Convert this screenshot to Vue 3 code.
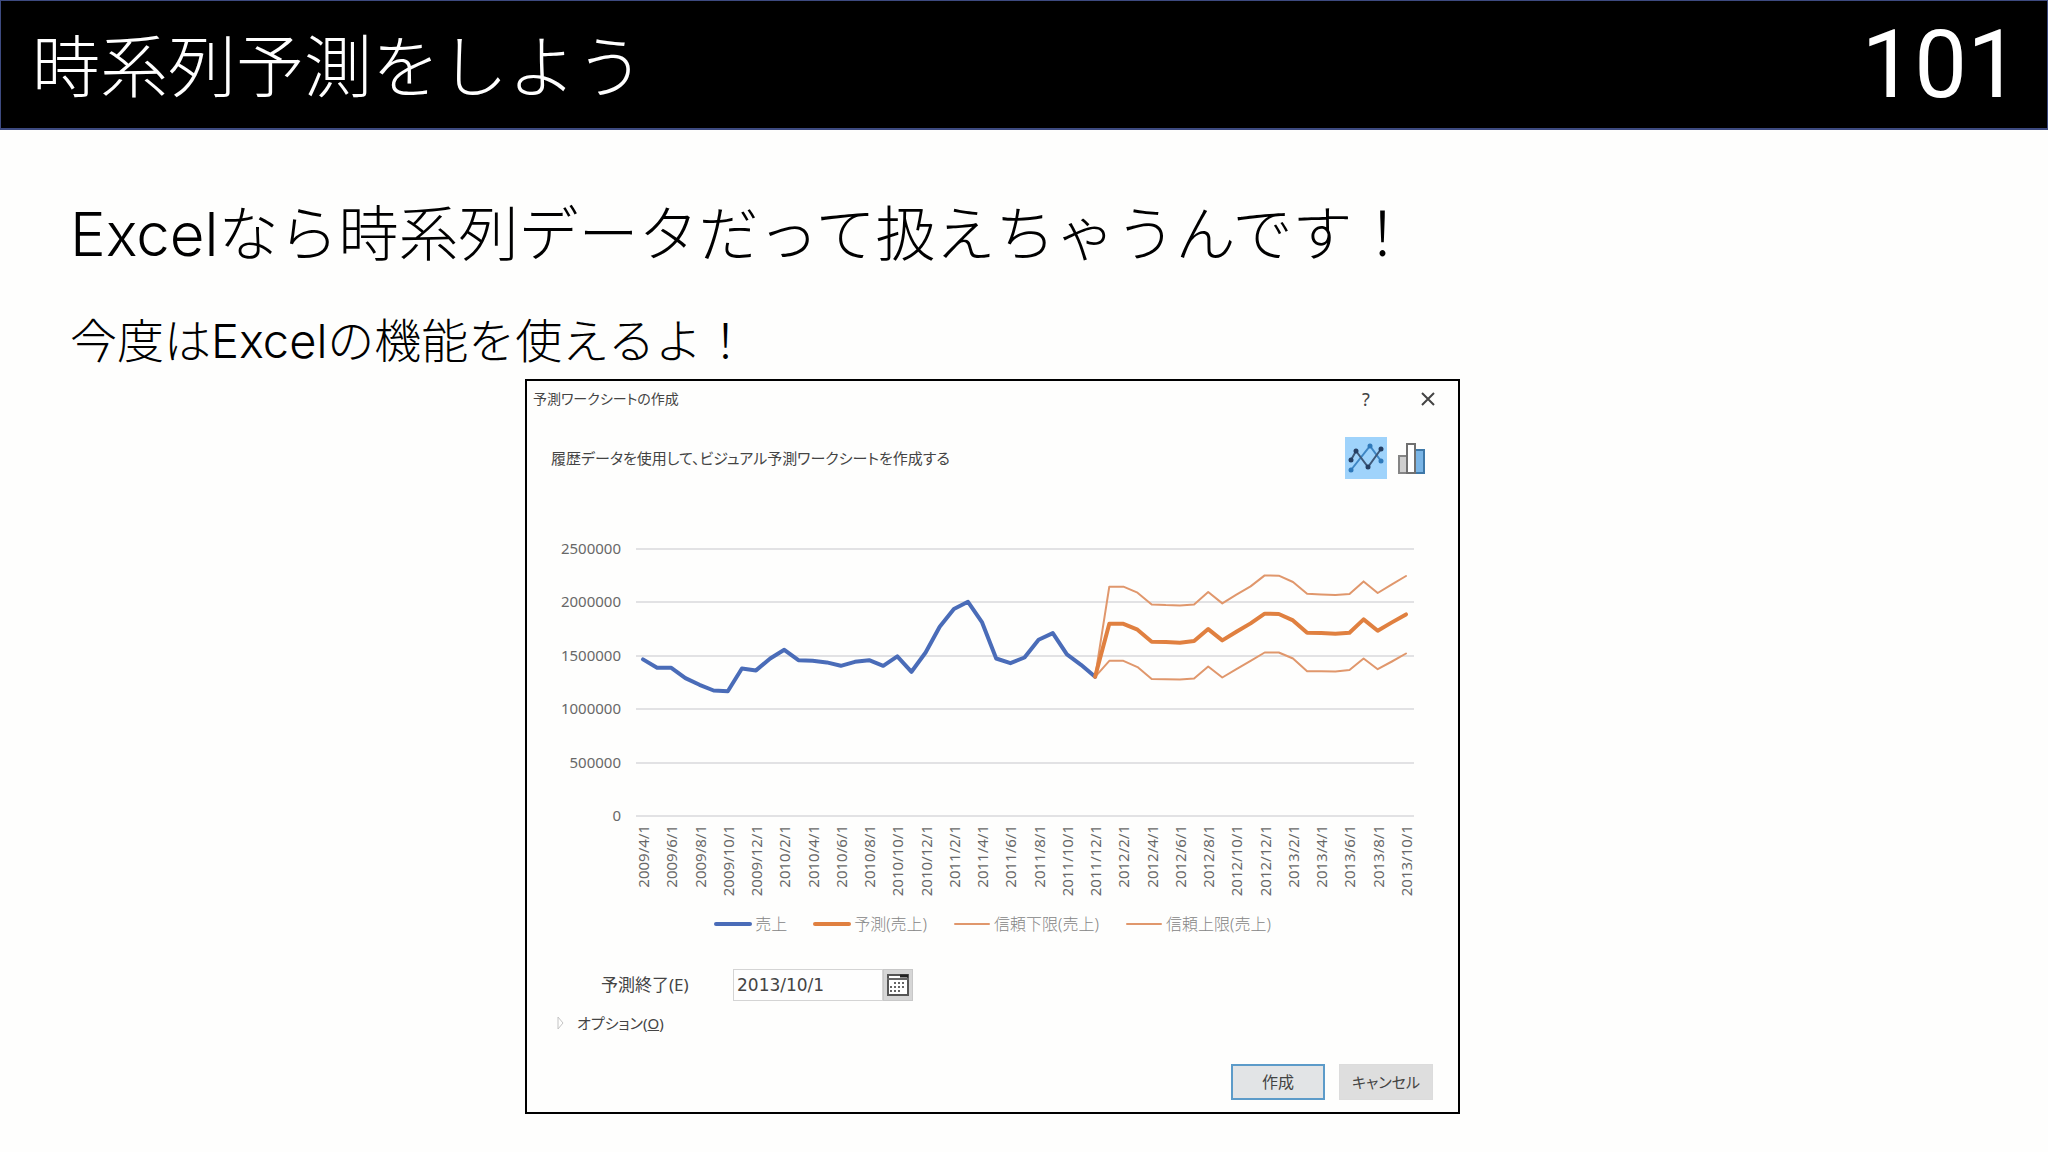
<script setup>
import { ref } from 'vue'

const endDate = ref('2013/10/1')
const view = ref('line')

// Monthly values in thousands, starting at 2009/4
const sales = [
  1466, 1388, 1388, 1291, 1228, 1175, 1169, 1381, 1363, 1475, 1556, 1459, 1453, 1438, 1406, 1444,
  1459, 1406, 1494, 1350, 1531, 1772, 1938, 2006, 1813, 1475, 1431, 1484, 1650, 1713, 1513, 1416, 1303,
]
const forecast = [
  1303, 1800, 1800, 1744, 1631, 1628, 1622, 1638, 1750, 1644, 1725, 1803, 1894, 1891, 1831, 1716,
  1713, 1706, 1716, 1841, 1734, 1813, 1888,
]
const upper = [
  1303, 2147, 2147, 2091, 1981, 1975, 1972, 1981, 2097, 1991, 2072, 2150, 2253, 2250, 2191, 2081,
  2075, 2069, 2078, 2197, 2088, 2169, 2247,
]
const lower = [
  1303, 1453, 1453, 1394, 1284, 1281, 1278, 1288, 1400, 1297, 1375, 1453, 1531, 1531, 1475, 1356,
  1356, 1353, 1366, 1475, 1375, 1447, 1522,
]

const months = 54
const plot = { left: 109, right: 887, first: 116, last: 879, top: 70, bottom: 337 }
const xAt = (i) => plot.first + ((plot.last - plot.first) * i) / months
const yAt = (v) => plot.bottom - ((plot.bottom - plot.top) * v) / 2500
const points = (values, start) => values.map((v, i) => `${xAt(start + i).toFixed(1)},${yAt(v).toFixed(1)}`).join(' ')

const series = [
  { cls: 'limit', pts: points(lower, 32) },
  { cls: 'limit', pts: points(upper, 32) },
  { cls: 'sales', pts: points(sales, 0) },
  { cls: 'forecast', pts: points(forecast, 32) },
]
const yTicks = [2500, 2000, 1500, 1000, 500, 0].map((v) => ({ label: String(v * 1000), y: Math.round(yAt(v)) }))
const xTicks = Array.from({ length: months / 2 + 1 }, (_, k) => {
  const m = 3 + k * 2
  return { label: `${2009 + Math.floor(m / 12)}/${(m % 12) + 1}/1`, x: Math.round(xAt(k * 2)) }
})
const legend = [
  { cls: 'sales', label: '売上' },
  { cls: 'forecast', label: '予測(売上)' },
  { cls: 'limit', label: '信頼下限(売上)' },
  { cls: 'limit', label: '信頼上限(売上)' },
]
</script>

<template>
  <div class="slide">
    <header class="banner">
      <h1>時系列予測をしよう</h1>
      <span class="page">101</span>
    </header>
    <main>
      <h2>Excelなら時系列データだって扱えちゃうんです！</h2>
      <p class="lead">今度はExcelの機能を使えるよ！</p>

      <section class="dialog" role="dialog" aria-labelledby="dialog-title">
        <div class="titlebar">
          <h3 id="dialog-title">予測ワークシートの作成</h3>
          <button type="button" class="plain help" aria-label="ヘルプ">?</button>
          <button type="button" class="plain close" aria-label="閉じる">
            <svg width="16" height="16" viewBox="0 0 16 16"><path d="M2 2 14 14M14 2 2 14" fill="none" stroke="#444" stroke-width="2" /></svg>
          </button>
        </div>

        <div class="toolbar">
          <p>履歴データを使用して、ビジュアル予測ワークシートを作成する</p>
          <button type="button" class="plain toggle" :class="{ on: view === 'line' }" aria-label="折れ線グラフ" @click="view = 'line'">
            <svg width="42" height="42" viewBox="0 0 42 42">
              <path d="M6 33 25 9 36 24" fill="none" stroke="#3f86c4" stroke-width="2" />
              <g fill="#2f79ba"><circle cx="6" cy="33" r="2.5" /><circle cx="25" cy="9" r="2.5" /><circle cx="36" cy="24" r="2.5" /></g>
              <path d="M6 23 11 14 23 30 36 12" fill="none" stroke="#3e5878" stroke-width="2" />
              <g fill="#263f63"><circle cx="6" cy="23" r="2.5" /><circle cx="11" cy="14" r="2.5" /><circle cx="23" cy="30" r="2.5" /><circle cx="36" cy="12" r="2.5" /></g>
            </svg>
          </button>
          <button type="button" class="plain toggle" :class="{ on: view === 'bar' }" aria-label="縦棒グラフ" @click="view = 'bar'">
            <svg width="42" height="42" viewBox="0 0 42 42">
              <rect x="8" y="19" width="8" height="17" fill="#cfcfcf" stroke="#858585" stroke-width="2" />
              <rect x="24" y="13" width="9" height="23" fill="#7ab5e6" stroke="#3e78a8" stroke-width="2" />
              <rect x="16" y="7" width="8" height="29" fill="#fff" stroke="#707070" stroke-width="2" />
            </svg>
          </button>
        </div>

        <svg class="chart" viewBox="0 0 931 433" role="img" aria-label="売上の予測グラフ">
          <g v-for="t in yTicks" :key="t.label">
            <line class="grid" :x1="plot.left" :x2="plot.right" :y1="t.y" :y2="t.y" />
            <text class="tick" x="94" :y="t.y + 5" text-anchor="end">{{ t.label }}</text>
          </g>
          <polyline v-for="(s, i) in series" :key="i" class="line" :class="s.cls" :points="s.pts" />
          <text
            v-for="t in xTicks"
            :key="t.label"
            class="tick"
            text-anchor="end"
            :transform="`translate(${t.x + 6} 346) rotate(-90)`"
          >{{ t.label }}</text>
        </svg>

        <ul class="legend">
          <li v-for="item in legend" :key="item.label">
            <svg width="38" height="6" viewBox="0 0 38 6"><line class="line" :class="item.cls" x1="2" x2="36" y1="3" y2="3" /></svg>
            {{ item.label }}
          </li>
        </ul>

        <div class="field">
          <label for="end-date">予測終了(E)</label>
          <input id="end-date" v-model="endDate" type="text" />
          <button type="button" class="calendar" aria-label="カレンダー">
            <svg width="24" height="24" viewBox="0 0 24 24">
              <rect x="2" y="2" width="20" height="20" fill="#fff" stroke="#555" stroke-width="2" />
              <path d="M1 6H23" stroke="#666" stroke-width="2" />
              <path d="M14 3H22" stroke="#222" stroke-width="3" />
              <path d="M8 10H20M4 14H20M4 18H16" stroke="#666" stroke-width="2" stroke-dasharray="2 2" />
            </svg>
          </button>
        </div>

        <button type="button" class="plain options">
          <svg width="8" height="14" viewBox="0 0 8 14"><path d="M1 1V13L6 7Z" fill="none" stroke="#c4c4c4" /></svg>
          <span>オプション(<u>O</u>)</span>
        </button>

        <footer class="actions">
          <button type="button" class="primary">作成</button>
          <button type="button">キャンセル</button>
        </footer>
      </section>
    </main>
  </div>
</template>

<style>
body {
  margin: 0;
  background: #fefefd;
}
</style>

<style scoped>
.slide {
  color: #000;
  font-family: Inter, "Noto Sans CJK JP", sans-serif;
}
.slide * {
  box-sizing: border-box;
}
h1, h2, h3, p, ul {
  margin: 0;
  padding: 0;
  font-weight: 300;
}
.banner {
  display: flex;
  align-items: center;
  justify-content: space-between;
  height: 130px;
  padding: 0 27px 0 31px;
  border: 1px solid #3d4a80;
  border-bottom-width: 2px;
  background: #000;
  color: #fff;
}
h1 {
  padding-top: 5px;
  font-size: 68px;
  line-height: 120px;
}
.page {
  font: 94px/124px Roboto, sans-serif;
}
main {
  padding: 64px 70px 37px;
}
h2 {
  font-size: 60px;
  line-height: 80px;
}
.lead {
  margin-top: 35px;
  font-size: 47px;
  line-height: 64px;
}
.dialog {
  width: 935px;
  max-width: 100%;
  margin: 6px 0 0 455px;
  border: 2px solid #000;
  color: #444;
  font: 15px/24px "Noto Sans", "Noto Sans CJK JP", sans-serif;
}
.titlebar, .toolbar p, .field label, .options, .actions {
  font-feature-settings: "palt";
}
button {
  font: inherit;
  font-feature-settings: inherit;
  color: inherit;
  padding: 0;
}
.plain {
  border: 0;
  background: none;
}
.titlebar {
  display: flex;
  align-items: center;
  height: 36px;
  padding: 0 22px 0 6px;
}
h3 {
  flex: 1;
  font-size: 14px;
  font-weight: 400;
}
.help {
  width: 20px;
  font-size: 18px;
}
.close {
  display: flex;
  margin-left: 44px;
}
.toolbar {
  display: flex;
  align-items: center;
  gap: 4px;
  margin-top: 20px;
  padding: 0 25px 0 24px;
}
.toolbar p {
  flex: 1;
  font-weight: 400;
}
.toggle {
  display: flex;
}
.toggle.on {
  background: #9fd3fb;
}
.chart {
  display: block;
  width: 100%;
}
.grid {
  stroke: #e2e2e4;
  stroke-width: 2;
}
.tick {
  fill: #686868;
  font-size: 15px;
}
.line {
  fill: none;
  stroke-linejoin: round;
  stroke-linecap: round;
}
.sales {
  stroke: #4a6cb8;
  stroke-width: 4;
}
.forecast {
  stroke: #e08040;
  stroke-width: 4;
}
.limit {
  stroke: #e0976c;
  stroke-width: 2;
}
.legend {
  display: flex;
  justify-content: center;
  gap: 26px;
  color: #858585;
  font-size: 16px;
  list-style: none;
}
.legend li {
  display: flex;
  align-items: center;
  gap: 3px;
}
.field {
  display: flex;
  height: 32px;
  margin-top: 33px;
  padding-left: 74px;
}
.field label {
  width: 132px;
  font-size: 17px;
  line-height: 32px;
}
.field input {
  width: 150px;
  padding: 0 3px;
  border: 1px solid #d4d4d4;
  background: #fefefe;
  color: #444;
  font: 17px "DejaVu Sans", sans-serif;
}
.calendar {
  display: flex;
  align-items: center;
  justify-content: center;
  width: 30px;
  border: 1px solid #c8c8c8;
  background: #d6d6d6;
}
.options {
  display: flex;
  align-items: center;
  gap: 12px;
  margin: 10px 0 0 30px;
  font-size: 15px;
}
.actions {
  display: flex;
  justify-content: flex-end;
  gap: 14px;
  margin-top: 29px;
  padding: 0 25px 12px;
}
.actions button {
  width: 94px;
  height: 36px;
  border: 1px solid #dcdcdc;
  background: #dedede;
}
.actions .primary {
  border: 2px solid #5c9bc9;
  background: #e2e4e6;
  font-size: 16px;
}
</style>
